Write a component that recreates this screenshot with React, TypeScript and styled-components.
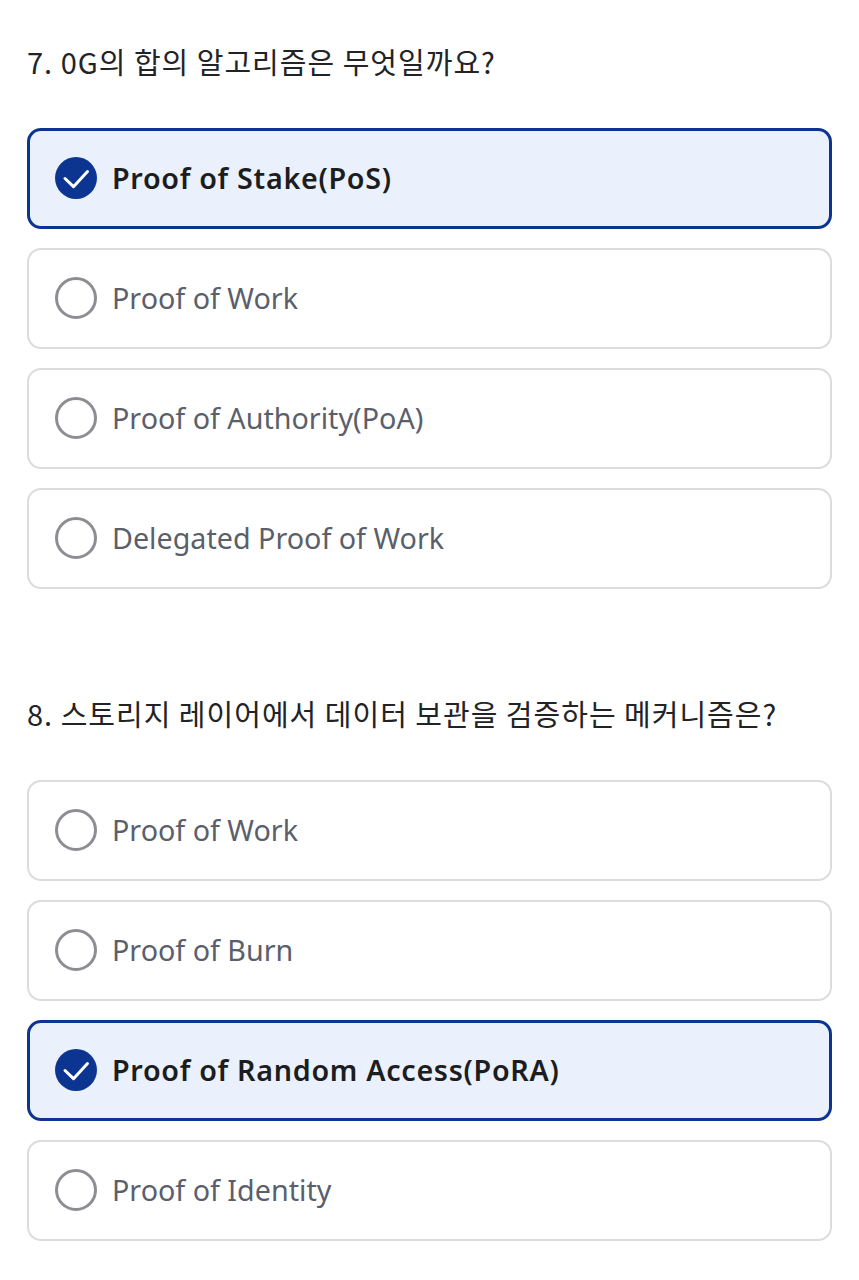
import React, { useState } from 'react';
import styled, { createGlobalStyle } from 'styled-components';

const GlobalStyle = createGlobalStyle`
  body {
    margin: 0;
    background: #ffffff;
    font-family: "Noto Sans", "Noto Sans CJK KR", sans-serif;
  }
`

const Page = styled.div`
  padding: 41px 27px 40px;
  display: flex;
  flex-direction: column;
  gap: 104px;
`

const Section = styled.section`
  display: flex;
  flex-direction: column;
`

const Question = styled.h2`
  margin: 0 0 47px;
  font-family: "Noto Sans CJK KR", "Noto Sans", sans-serif;
  font-size: 29px;
  letter-spacing: 1px;
  line-height: 40px;
  font-weight: 400;
  color: #222326;
`

const List = styled.div`
  display: flex;
  flex-direction: column;
  gap: 19px;
`

const Option = styled.button<{ $selected: boolean }>`
  box-sizing: border-box;
  height: 101px;
  width: 100%;
  display: flex;
  align-items: center;
  gap: 15px;
  padding: 0 0 2px ${p => (p.$selected ? 25 : 26)}px;
  border-radius: 14px;
  border: ${p => (p.$selected ? '3px solid #0c3591' : '2px solid #dcdcde')};
  background: ${p => (p.$selected ? '#ebf1fc' : '#ffffff')};
  cursor: pointer;
  text-align: left;
  font-family: "Noto Sans", "Noto Sans CJK KR", sans-serif;
`

const Radio = styled.span`
  box-sizing: border-box;
  width: 42px;
  height: 42px;
  flex: none;
  border-radius: 50%;
  border: 3px solid #8d8e93;
`

const Check = styled.svg`
  display: block;
  width: 42px;
  height: 42px;
  flex: none;
`

const Label = styled.span<{ $selected: boolean }>`
  font-size: 28.7px;
  line-height: 40px;
  font-weight: ${p => (p.$selected ? 600 : 400)};
  letter-spacing: ${p => (p.$selected ? '0.7px' : '0')};
  color: ${p => (p.$selected ? '#1c1d20' : '#5a5f6b')};
`

const quiz = [
  {
    q: '7. 0G의 합의 알고리즘은 무엇일까요?',
    options: ['Proof of Stake(PoS)', 'Proof of Work', 'Proof of Authority(PoA)', 'Delegated Proof of Work'],
    answer: 0,
  },
  {
    q: '8. 스토리지 레이어에서 데이터 보관을 검증하는 메커니즘은?',
    options: ['Proof of Work', 'Proof of Burn', 'Proof of Random Access(PoRA)', 'Proof of Identity'],
    answer: 2,
  },
]

function App() {
  const [picked, setPicked] = useState(quiz.map(item => item.answer))

  return (
    <>
      <GlobalStyle />
      <Page>
        {quiz.map((item, qi) => (
          <Section key={qi}>
            <Question>{item.q}</Question>
            <List>
              {item.options.map((opt, oi) => {
                const selected = picked[qi] === oi
                return (
                  <Option
                    key={oi}
                    $selected={selected}
                    onClick={() => setPicked(prev => prev.map((v, i) => (i === qi ? oi : v)))}
                  >
                    {selected ? (
                      <Check viewBox="0 0 42 42">
                        <circle cx="21" cy="21" r="21" fill="#0b3590" />
                        <path d="M10 21.5l8.5 8.2L32.5 14.5" fill="none" stroke="#fff" strokeWidth="3" strokeLinecap="round" strokeLinejoin="round" />
                      </Check>
                    ) : (
                      <Radio />
                    )}
                    <Label $selected={selected}>{opt}</Label>
                  </Option>
                )
              })}
            </List>
          </Section>
        ))}
      </Page>
    </>
  )
}

export default App
